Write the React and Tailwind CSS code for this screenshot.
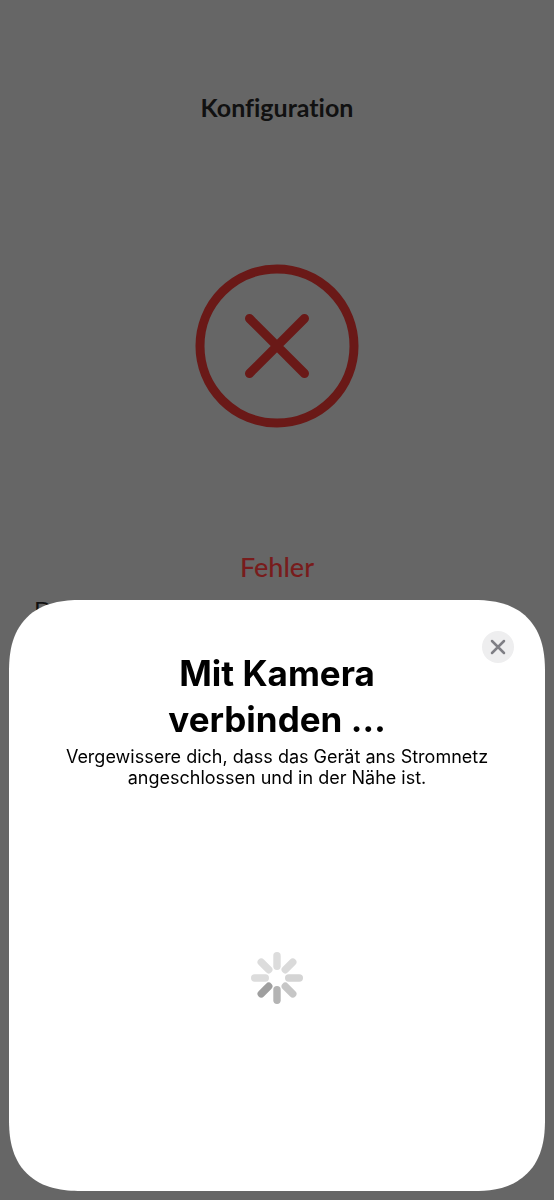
import React from "react";

const spokes = [
  { angle: 0, color: "#dcdcdc" },
  { angle: 45, color: "#dadada" },
  { angle: 90, color: "#d4d4d4" },
  { angle: 135, color: "#c6c6c6" },
  { angle: 180, color: "#b4b4b4" },
  { angle: 225, color: "#9f9f9f" },
  { angle: 270, color: "#dcdcdc" },
  { angle: 315, color: "#dcdcdc" },
];

function ErrorIcon() {
  return (
    <svg
      width="164"
      height="164"
      viewBox="0 0 164 164"
      fill="none"
      stroke="#6a1917"
      strokeLinecap="round"
      aria-hidden="true"
    >
      <circle cx="82" cy="82" r="77" strokeWidth="9" />
      <path d="M54.500 54.500L109.500 109.500M109.500 54.500L54.500 109.500" strokeWidth="9" />
    </svg>
  );
}

function CloseIcon() {
  return (
    <svg
      width="16"
      height="16"
      viewBox="0 0 16 16"
      fill="none"
      stroke="#7f7f85"
      strokeWidth="2.500"
      strokeLinecap="round"
      aria-hidden="true"
    >
      <path d="M2 2L14 14M14 2L2 14" />
    </svg>
  );
}

function Spinner() {
  return (
    <svg width="52" height="52" viewBox="0 0 52 52" role="img" aria-label="Laden">
      {spokes.map((spoke) => (
        <rect
          key={spoke.angle}
          x="22.300"
          y="0"
          width="7.400"
          height="18"
          rx="3.700"
          fill={spoke.color}
          transform={`rotate(${spoke.angle} 26 26)`}
        />
      ))}
    </svg>
  );
}

function ConnectSheet() {
  return (
    <section
      role="dialog"
      aria-labelledby="sheet-title"
      className="fixed inset-x-[9px] bottom-[9px] flex flex-col items-center rounded-[60px] supports-[corner-shape:squircle]:rounded-[72px] supports-[corner-shape:squircle]:[corner-shape:superellipse(1.3)] bg-white px-8 pt-[50px] pb-[187px] font-['Inter',sans-serif] text-black"
    >
      <button
        type="button"
        aria-label="Schließen"
        className="absolute top-[31px] right-[31px] flex h-8 w-8 items-center justify-center rounded-full bg-[#eeeeef]"
      >
        <CloseIcon />
      </button>
      <h2
        id="sheet-title"
        className="text-center text-[35px] leading-[46px] font-bold"
      >
        Mit Kamera
        <br />
        verbinden …
      </h2>
      <p className="mt-1 mb-[164px] text-center text-[18px] leading-[21px]">
        Vergewissere dich, dass das Gerät ans Stromnetz
        <br />
        angeschlossen und in der Nähe ist.
      </p>
      <Spinner />
    </section>
  );
}

export default function App() {
  return (
    <div className="min-h-screen bg-[#666666] font-['Lato',sans-serif] [font-variant-ligatures:none]">
      <main className="flex flex-col items-center px-[34px] pt-[92px]">
        <h1 className="text-[25px] leading-[30px] font-bold text-[#111111]">
          Konfiguration
        </h1>
        <div className="mt-[142px]">
          <ErrorIcon />
        </div>
        <p className="mt-[123px] text-[27px] leading-[32px] font-medium text-[#781c1c]">
          Fehler
        </p>
        <p className="mt-3 self-start text-[24px] leading-[30px] text-[#111111]">
          D
        </p>
      </main>
      <ConnectSheet />
    </div>
  );
}
